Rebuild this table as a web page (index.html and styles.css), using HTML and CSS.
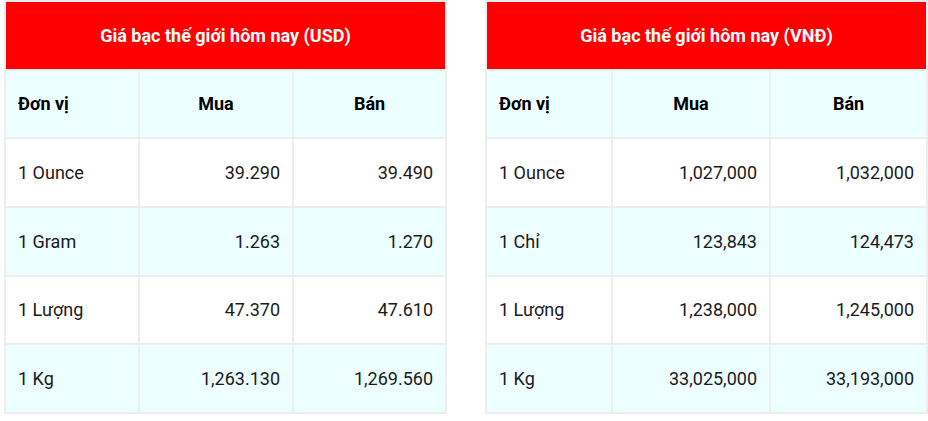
FILE: index.html
```html
<!DOCTYPE html>
<html lang="vi">
<head>
<meta charset="utf-8">
<title>Giá bạc thế giới hôm nay</title>
<link rel="stylesheet" href="styles.css">
</head>
<body>
<div class="page">
  <div class="price-table usd">
    <div class="cell title">Giá bạc thế giới hôm nay (USD)</div>
    <div class="cell head left">Đơn vị</div>
    <div class="cell head">Mua</div>
    <div class="cell head">Bán</div>
    <div class="cell left">1 Ounce</div>
    <div class="cell num">39.290</div>
    <div class="cell num">39.490</div>
    <div class="cell left alt">1 Gram</div>
    <div class="cell num alt">1.263</div>
    <div class="cell num alt">1.270</div>
    <div class="cell left">1 Lượng</div>
    <div class="cell num">47.370</div>
    <div class="cell num">47.610</div>
    <div class="cell left alt">1 Kg</div>
    <div class="cell num alt">1,263.130</div>
    <div class="cell num alt">1,269.560</div>
  </div>
  <div class="price-table vnd">
    <div class="cell title">Giá bạc thế giới hôm nay (VNĐ)</div>
    <div class="cell head left">Đơn vị</div>
    <div class="cell head">Mua</div>
    <div class="cell head">Bán</div>
    <div class="cell left">1 Ounce</div>
    <div class="cell num">1,027,000</div>
    <div class="cell num">1,032,000</div>
    <div class="cell left alt">1 Chỉ</div>
    <div class="cell num alt">123,843</div>
    <div class="cell num alt">124,473</div>
    <div class="cell left">1 Lượng</div>
    <div class="cell num">1,238,000</div>
    <div class="cell num">1,245,000</div>
    <div class="cell left alt">1 Kg</div>
    <div class="cell num alt">33,025,000</div>
    <div class="cell num alt">33,193,000</div>
  </div>
</div>
</body>
</html>
```

FILE: styles.css
```css
* { box-sizing: border-box; }
html, body {
  margin: 0;
  padding: 0;
  background: #ffffff;
}
body {
  font-family: Roboto, "Liberation Sans", Arial, sans-serif;
  font-size: 18px;
  color: #1a1a1a;
}
.page {
  display: flex;
  gap: 38px;
  padding-left: 4px;
  width: 928px;
  overflow: hidden;
}
.price-table {
  display: grid;
  width: 443px;
  flex: none;
  background: #eeeeee;
  padding: 2px;
  gap: 2px;
  grid-auto-rows: 66.67px;
}
.usd { grid-template-columns: 132px 152px 151px; }
.vnd { grid-template-columns: 124px 156px 155px; }
.cell {
  display: flex;
  align-items: center;
  justify-content: center;
  padding: 0 12px;
  background: #ffffff;
  white-space: nowrap;
}
.title {
  grid-column: 1 / 4;
  background: #ff0000;
  color: #ffffff;
  font-weight: 700;
}
.head {
  background: #ecfeff;
  font-weight: 700;
  color: #000000;
}
.left { justify-content: flex-start; }
.num { justify-content: flex-end; }
.alt { background: #ecfeff; }
```
